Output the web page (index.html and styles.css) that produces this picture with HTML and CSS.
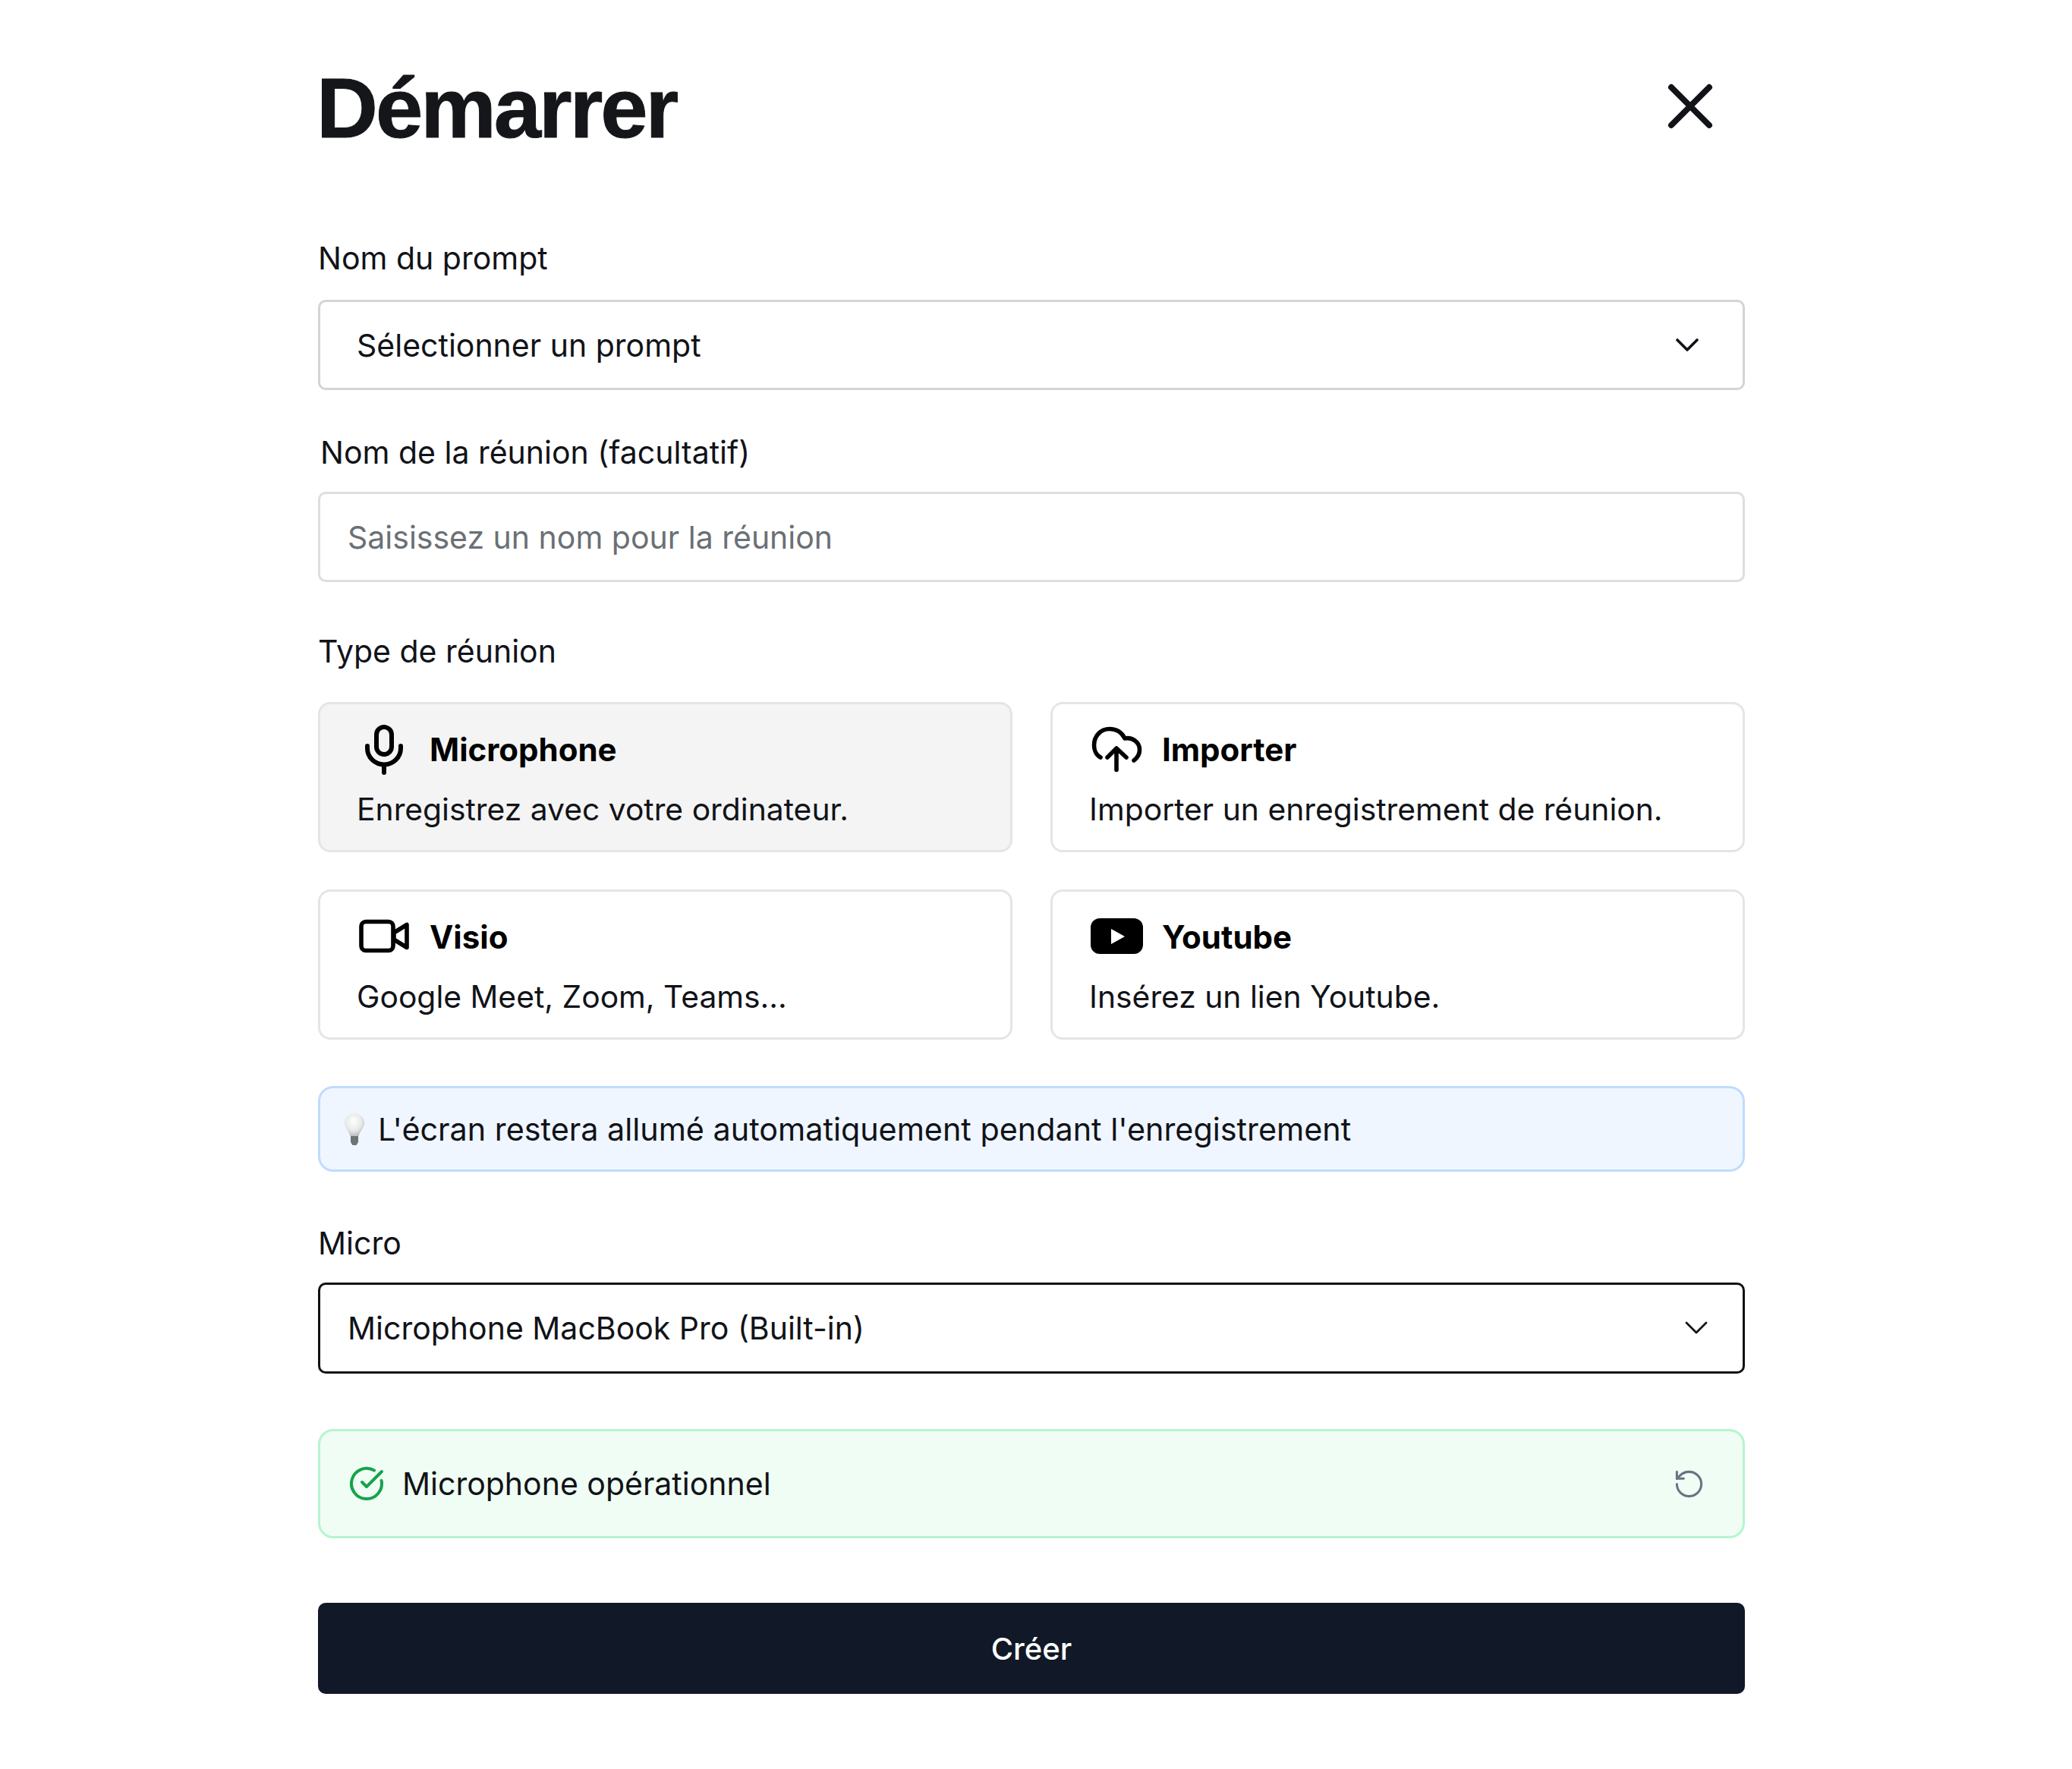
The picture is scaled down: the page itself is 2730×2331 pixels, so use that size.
FILE: index.html
```html
<!DOCTYPE html>
<html lang="fr">
<head>
  <meta charset="UTF-8">
  <title>Démarrer</title>
  <link rel="stylesheet" href="styles.css">
</head>
<body>
  <div class="contenedor">
    <div class="entete">
      <h1>Démarrer</h1>
      <svg class="fermer" viewBox="0 0 60 60" fill="none" stroke="currentColor" stroke-width="8" stroke-linecap="round"><path d="M5 5 55 55M55 5 5 55"/></svg>
    </div>

    <div class="label label-prompt">Nom du prompt</div>
    <div class="champ champ-prompt">
      <span>Sélectionner un prompt</span>
      <svg class="chevron" viewBox="0 0 30 18" fill="none" stroke="currentColor" stroke-width="3.6" stroke-linecap="round" stroke-linejoin="round"><path d="M2 2 15 15 28 2"/></svg>
    </div>

    <div class="label label-nom">Nom de la réunion (facultatif)</div>
    <div class="champ champ-nom placeholder">Saisissez un nom pour la réunion</div>

    <div class="label label-type">Type de réunion</div>
    <div class="types">
      <div class="carte active">
        <div class="carte-titre">
          <svg class="icone" viewBox="0 0 72 70" fill="none" stroke="currentColor" stroke-width="6" stroke-linecap="round" stroke-linejoin="round">
            <rect x="26" y="5" width="20" height="36" rx="10"/>
            <path d="M14 30v3a22 21.5 0 0 0 44 0v-3M36 55v10"/>
          </svg>
          <span>Microphone</span>
        </div>
        <div class="carte-texte">Enregistrez avec votre ordinateur.</div>
      </div>
      <div class="carte">
        <div class="carte-titre">
          <svg class="icone" viewBox="0 0 72 70" fill="none" stroke="currentColor" stroke-width="5.600" stroke-linecap="round" stroke-linejoin="round">
            <path d="M15 45C9 42 6.500 35 6.500 29 6.500 17 15 7.500 27 7.500 36 7.500 43 12 47 20 57 18 66.500 25 66.500 35 66.500 41 63 46 59 49"/>
            <path d="M24 45 36 33 49 45M36 33V61.500"/>
          </svg>
          <span>Importer</span>
        </div>
        <div class="carte-texte">Importer un enregistrement de réunion.</div>
      </div>
      <div class="carte">
        <div class="carte-titre">
          <svg class="icone" viewBox="0 0 72 70" fill="none" stroke="currentColor" stroke-width="5.600" stroke-linecap="round" stroke-linejoin="round">
            <rect x="6" y="14.500" width="42" height="38" rx="6"/>
            <path d="M49 29 66 18.500V48.500L49 38Z"/>
          </svg>
          <span>Visio</span>
        </div>
        <div class="carte-texte">Google Meet, Zoom, Teams...</div>
      </div>
      <div class="carte">
        <div class="carte-titre">
          <svg class="icone" viewBox="0 0 72 70">
            <rect x="2" y="10" width="69" height="47" rx="12" fill="currentColor"/>
            <path d="M29 24 47 34 29 44Z" fill="#fff"/>
          </svg>
          <span>Youtube</span>
        </div>
        <div class="carte-texte">Insérez un lien Youtube.</div>
      </div>
    </div>

    <div class="info">
      <svg class="ampoule" viewBox="0 0 26 42">
        <defs>
          <radialGradient id="verre" cx="0.45" cy="0.35" r="0.7">
            <stop offset="0" stop-color="#ffffff"/>
            <stop offset="0.6" stop-color="#e6e9e7"/>
            <stop offset="1" stop-color="#b0b4b2"/>
          </radialGradient>
        </defs>
        <path d="M13 0C5.500 0 0 5.500 0 12.500 0 19 5 22 7.500 30H18.500C21 22 26 19 26 12.500 26 5.500 20.500 0 13 0Z" fill="url(#verre)"/>
        <path d="M8 30H18V38L15.500 42H10.500L8 38Z" fill="#6f7375"/>
      </svg>
      L'écran restera allumé automatiquement pendant l'enregistrement
    </div>

    <div class="label label-micro">Micro</div>
    <div class="champ champ-micro">
      <span>Microphone MacBook Pro (Built-in)</span>
      <svg class="chevron" viewBox="0 0 30 18" fill="none" stroke="currentColor" stroke-width="2.800" stroke-linecap="round" stroke-linejoin="round"><path d="M2 2 15 15 28 2"/></svg>
    </div>

    <div class="statut">
      <svg class="statut-ok" viewBox="0 0 24 24" fill="none" stroke="#16a34a" stroke-width="2" stroke-linecap="round" stroke-linejoin="round">
        <path d="M21.800 10A10 10 0 1 1 17 3.300"/>
        <path d="m9 11 3 3L22 4"/>
      </svg>
      <span class="statut-texte">Microphone opérationnel</span>
      <svg class="statut-retour" viewBox="0 0 24 24" fill="none" stroke="#6b7280" stroke-width="1.700" stroke-linecap="round" stroke-linejoin="round">
        <path d="M3 12a9 9 0 1 0 9-9 9.750 9.750 0 0 0-6.740 2.740L3 8"/>
        <path d="M3 3v5h5"/>
      </svg>
    </div>

    <button class="creer">Créer</button>
  </div>
</body>
</html>
```
FILE: styles.css
```css
body {
  font-family: 'Inter', 'Liberation Sans', sans-serif;
  background-color: #fff;
  color: #111318;
  margin: 0;
  font-size: 41px;
}

.contenedor {
  width: 1880px;
  margin-left: 419px;
  padding: 80px 0 99px;
}

.entete {
  display: flex;
  justify-content: space-between;
  align-items: center;
  height: 120px;
  padding-right: 42px;
}

h1 {
  font-family: 'Liberation Sans', sans-serif;
  font-size: 112px;
  font-weight: 700;
  letter-spacing: -3px;
  line-height: 120px;
  margin: 0 0 0 -2px;
  padding-top: 6px;
  color: #14161a;
  -webkit-text-stroke: 1px #14161a;
}

.fermer {
  width: 60px;
  height: 60px;
}

.label {
  line-height: 50px;
}

.label-prompt { margin: 115px 0 30px; }
.label-nom { margin: 57px 0 27px 3px; }
.label-type { margin: 66px 0 42px; }
.label-micro { margin: 69px 0 27px; }

.champ {
  display: flex;
  justify-content: space-between;
  align-items: center;
  box-sizing: border-box;
  height: 119px;
  background: #fff;
  border: 3px solid #d4d4d4;
  border-radius: 10px;
}

.champ-prompt {
  padding: 0 58px 0 48px;
}

.champ-nom {
  padding: 0 36px;
  border-color: #dedede;
}

.placeholder {
  color: #6b7075;
}

.champ-micro {
  height: 120px;
  border-color: #111;
  padding: 0 46px 0 36px;
}

.chevron {
  width: 30px;
  height: 18px;
}

.types {
  display: grid;
  grid-template-columns: 1fr 1fr;
  column-gap: 50px;
  row-gap: 49px;
}

.carte {
  box-sizing: border-box;
  height: 198px;
  padding: 25px 48px 0;
  border: 3px solid #e4e5e6;
  border-radius: 16px;
}

.carte.active {
  background: #f4f4f4;
}

.carte-titre {
  display: flex;
  align-items: center;
  gap: 24px;
  height: 70px;
  font-size: 42px;
  font-weight: 700;
  color: #000;
}

.carte-titre span {
  margin-bottom: 2px;
}

.icone {
  width: 72px;
  height: 70px;
}

.carte-texte {
  margin-top: 18px;
  font-size: 40.800px;
  line-height: 50px;
}

.info {
  display: flex;
  align-items: center;
  gap: 18px;
  box-sizing: border-box;
  height: 113px;
  margin-top: 61px;
  padding-left: 32px;
  font-size: 41.300px;
  background: #eff6ff;
  border: 3px solid #bfdbfe;
  border-radius: 20px;
}

.ampoule {
  width: 26px;
  height: 42px;
}

.statut {
  display: flex;
  align-items: center;
  box-sizing: border-box;
  height: 144px;
  margin-top: 73px;
  padding: 0 49px 0 37px;
  background: #f0fdf4;
  border: 3px solid #b5f5cf;
  border-radius: 20px;
}

.statut-ok {
  width: 48px;
  height: 48px;
  margin-right: 23px;
}

.statut-texte {
  flex: 1;
}

.statut-retour {
  width: 43px;
  height: 43px;
}

.creer {
  display: block;
  width: 100%;
  height: 120px;
  margin-top: 85px;
  background: #111827;
  color: #fff;
  border: none;
  border-radius: 10px;
  font-family: inherit;
  font-size: 40px;
  font-weight: 500;
}
```
